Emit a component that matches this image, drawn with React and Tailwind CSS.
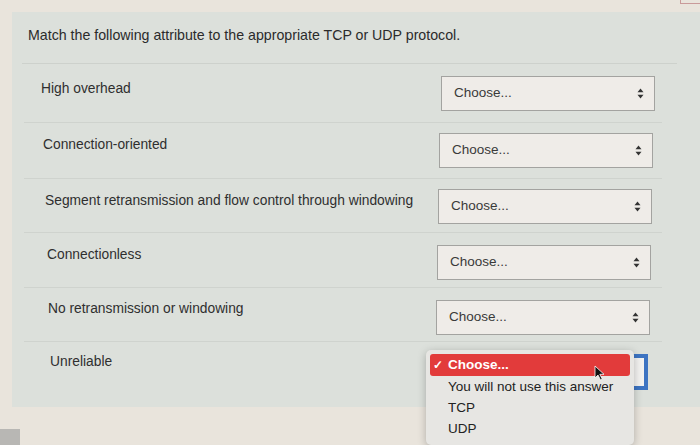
import { useState } from "react";

const ROWS = [
    { label: "High overhead", pad: "pl-[29px] pt-[15px]", sel: "left-[429px] top-[12px]", h: "h-[58px]" },
    { label: "Connection-oriented", pad: "pl-[31px] pt-[12px]", sel: "left-[427px] top-[10px]", h: "h-[55px]" },
    { label: "Segment retransmission and flow control through windowing", pad: "pl-[33px] pt-[12px]", sel: "left-[426px] top-[10px]", h: "h-[53px]" },
    { label: "Connectionless", pad: "pl-[35px] pt-[12px]", sel: "left-[425px] top-[12px]", h: "h-[54px]" },
    { label: "No retransmission or windowing", pad: "pl-[36px] pt-[11px]", sel: "left-[424px] top-[12px]", h: "h-[53px]" },
];

const OPTIONS = ["You will not use this answer", "TCP", "UDP"];

function Arrows() {
    return (
        <svg width="7" height="11" viewBox="0 0 7 11" className="shrink-0">
            <path d="M3.5 0.5 L6.5 4.2 L0.5 4.2 Z" fill="#333" />
            <path d="M3.5 10.5 L6.5 6.8 L0.5 6.8 Z" fill="#333" />
        </svg>
    );
}

function FakeSelect({ focused }) {
    // the open one sits under its menu, only the blue focus edge shows
    if (focused) {
        return <div className="w-[212px] h-[36px] bg-[#f3f2f0] border-[4px] border-[#3d74c2]" />;
    }
    return (
        <div className="w-[214px] h-[35px] bg-[#efece8] border border-[#a3a3a0] flex items-center justify-between pl-[12px] pr-[10px]">
            <span className="text-[13.5px] text-[#3a3a3a]">Choose...</span>
            <Arrows />
        </div>
    );
}

export default function App() {
    const [open] = useState(true);

    return (
        <div
            className="w-[700px] h-[445px] bg-[#e9e4dc] relative overflow-hidden pt-[12px] pl-[12px]"
            style={{ fontFamily: '"Liberation Sans", Arial, sans-serif' }}
        >
            {/* panel */}
            <div className="h-[395px] bg-[#dce0db] flex flex-col">
                <div className="h-[51px] pl-[16px] pt-[13px] text-[14.2px] text-[#2b2b2b]">
                    Match the following attribute to the appropriate TCP or UDP protocol.
                </div>
                <div className="ml-[10px] mr-[23px] border-t border-[#cdd1cc]" />

                {ROWS.map((r, i) => (
                    <div key={i} className="flex flex-col">
                        <div className={`${r.h} relative`}>
                            <div className={`${r.pad} text-[13.8px] text-[#2f2f2f]`}>{r.label}</div>
                            <div className={`absolute ${r.sel}`}>
                                <FakeSelect />
                            </div>
                        </div>
                        <div className="ml-[12px] mr-[38px] border-t border-[#cfd3ce]" />
                    </div>
                ))}

                <div className="relative flex-1">
                    <div className="pl-[38px] pt-[10px] text-[13.8px] text-[#2f2f2f]">Unreliable</div>
                    <div className="absolute top-[12px] left-[424px]">
                        <FakeSelect focused />
                    </div>

                    {open && (
                        <div className="absolute top-[8px] left-[414px] w-[208px] bg-[#e7e6e3] rounded-[5px] shadow-[0_2px_8px_rgba(0,0,0,0.25)] pt-[4px] pb-[6px] px-[4px]">
                            <div className="h-[22px] bg-[#e23b3b] rounded-[3px] flex items-center pl-[3px] text-white text-[13.5px] font-bold">
                                <span className="w-[15px] text-[12px]">✓</span>
                                <span>Choose...</span>
                            </div>
                            {OPTIONS.map((o) => (
                                <div key={o} className="h-[21px] flex items-end pl-[18px] text-[13.5px] text-[#222]">
                                    {o}
                                </div>
                            ))}
                            {/* mouse pointer */}
                            <svg width="11" height="16" viewBox="0 0 11 16" className="absolute left-[168px] top-[15px]">
                                <path d="M1 1 L1 13 L4 10 L6.5 15 L8.3 14.2 L5.8 9.3 L10 9.3 Z" fill="#111" stroke="#fff" strokeWidth="0.8" />
                            </svg>
                        </div>
                    )}
                </div>
            </div>

            {/* corner bits of the surrounding screen */}
            <div className="absolute top-0 right-0 w-[20px] h-[4px] border-l border-b border-[#c99a9a]" />
            <div className="absolute bottom-0 left-0 w-[20px] h-[16px] bg-[#b8b7b4]" />
        </div>
    );
}
